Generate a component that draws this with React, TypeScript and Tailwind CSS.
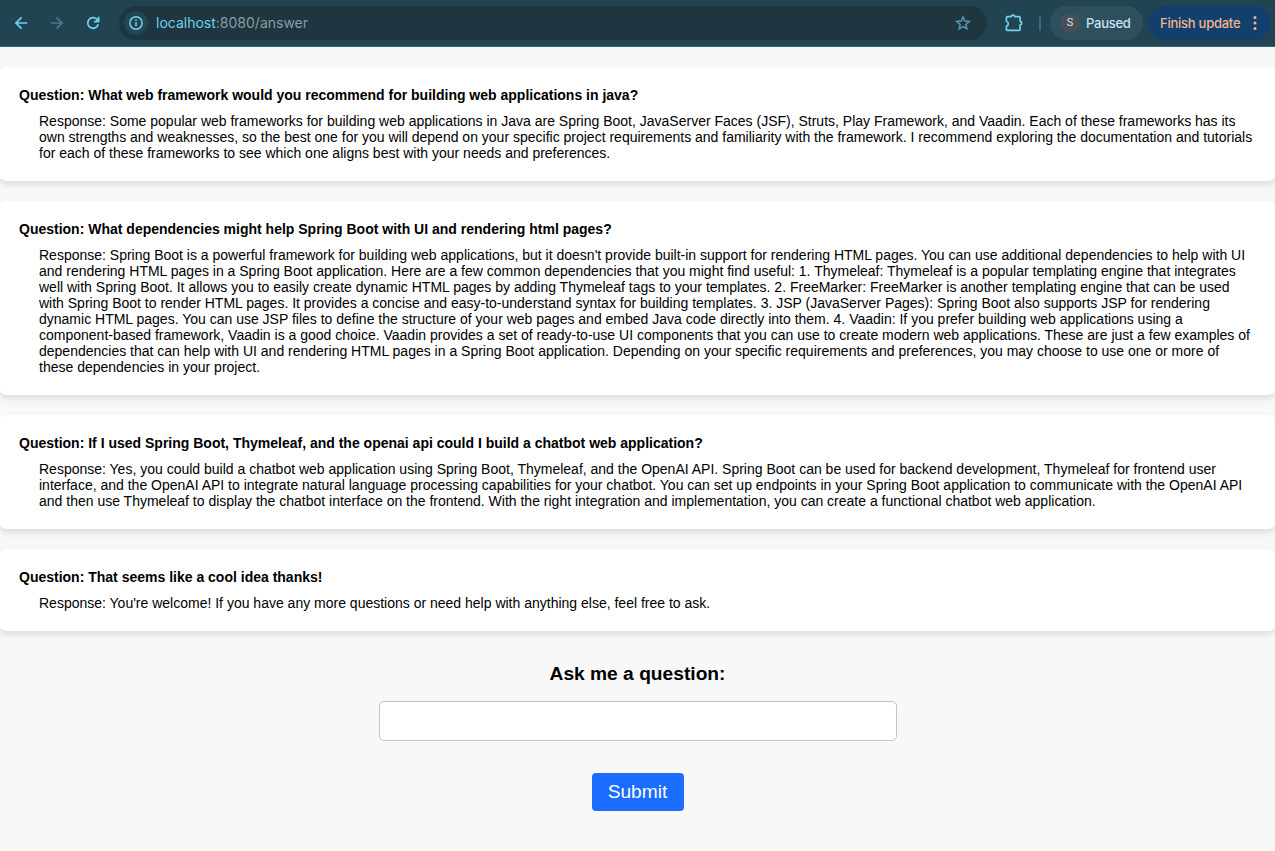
import React from "react";

type Exchange = { question: string; response: string[] };

const exchanges: Exchange[] = [
  {
    question: "What web framework would you recommend for building web applications in java?",
    response: [
      "Response: Some popular web frameworks for building web applications in Java are Spring Boot, JavaServer Faces (JSF), Struts, Play Framework, and Vaadin. Each of these frameworks has its",
      "own strengths and weaknesses, so the best one for you will depend on your specific project requirements and familiarity with the framework. I recommend exploring the documentation and tutorials",
      "for each of these frameworks to see which one aligns best with your needs and preferences.",
    ],
  },
  {
    question: "What dependencies might help Spring Boot with UI and rendering html pages?",
    response: [
      "Response: Spring Boot is a powerful framework for building web applications, but it doesn't provide built-in support for rendering HTML pages. You can use additional dependencies to help with UI",
      "and rendering HTML pages in a Spring Boot application. Here are a few common dependencies that you might find useful: 1. Thymeleaf: Thymeleaf is a popular templating engine that integrates",
      "well with Spring Boot. It allows you to easily create dynamic HTML pages by adding Thymeleaf tags to your templates. 2. FreeMarker: FreeMarker is another templating engine that can be used",
      "with Spring Boot to render HTML pages. It provides a concise and easy-to-understand syntax for building templates. 3. JSP (JavaServer Pages): Spring Boot also supports JSP for rendering",
      "dynamic HTML pages. You can use JSP files to define the structure of your web pages and embed Java code directly into them. 4. Vaadin: If you prefer building web applications using a",
      "component-based framework, Vaadin is a good choice. Vaadin provides a set of ready-to-use UI components that you can use to create modern web applications. These are just a few examples of",
      "dependencies that can help with UI and rendering HTML pages in a Spring Boot application. Depending on your specific requirements and preferences, you may choose to use one or more of",
      "these dependencies in your project.",
    ],
  },
  {
    question: "If I used Spring Boot, Thymeleaf, and the openai api could I build a chatbot web application?",
    response: [
      "Response: Yes, you could build a chatbot web application using Spring Boot, Thymeleaf, and the OpenAI API. Spring Boot can be used for backend development, Thymeleaf for frontend user",
      "interface, and the OpenAI API to integrate natural language processing capabilities for your chatbot. You can set up endpoints in your Spring Boot application to communicate with the OpenAI API",
      "and then use Thymeleaf to display the chatbot interface on the frontend. With the right integration and implementation, you can create a functional chatbot web application.",
    ],
  },
  {
    question: "That seems like a cool idea thanks!",
    response: ["Response: You're welcome! If you have any more questions or need help with anything else, feel free to ask."],
  },
];

function BrowserBar() {
  return (
    <header className="flex h-[47px] items-center border-b border-[#33677a] bg-[#224452] font-['Inter',sans-serif]">
      <button className="ml-[13px] flex size-4 items-center justify-center text-[#71d0ee]" aria-label="Back">
        <svg width="16" height="16" viewBox="0 0 16 16" fill="none" stroke="currentColor" strokeWidth="1.7">
          <path d="M14.2 8H3M8.6 2.3 2.9 8l5.7 5.7" />
        </svg>
      </button>
      <button className="ml-5 flex size-4 items-center justify-center text-[#427b90]" aria-label="Forward">
        <svg width="16" height="16" viewBox="0 0 16 16" fill="none" stroke="currentColor" strokeWidth="1.7">
          <path d="M1.8 8H13M7.4 2.3 13.1 8l-5.7 5.7" />
        </svg>
      </button>
      <button className="ml-5 flex size-4 items-center justify-center text-[#71d0ee]" aria-label="Reload">
        <svg width="16" height="16" viewBox="0 0 16 16" fill="none" stroke="currentColor" strokeWidth="1.8">
          <path d="M13.2 9.2A5.3 5.3 0 1 1 11.8 4.2L13.6 6" />
          <path d="M13.6 1.8v4.8H8.9" />
          <path d="M13.6 3v3.6H10z" fill="currentColor" stroke="none" />
        </svg>
      </button>

      <div className="ml-[18px] flex h-[34px] w-[868px] items-center rounded-full bg-[#1d363f]">
        <span className="ml-[5px] flex size-6 items-center justify-center rounded-full bg-[#244653] text-[#71d0ee]">
          <svg width="16" height="16" viewBox="0 0 16 16" fill="none" stroke="currentColor" strokeWidth="1.5">
            <circle cx="8" cy="8" r="6.2" />
            <path d="M8 7.2v3.9M8 4.6v1.5" strokeWidth="1.6" />
          </svg>
        </span>
        <span className="ml-2 whitespace-nowrap text-sm leading-4 text-[#8d9da3]">
          <span className="text-[#71d0ee]">localhost</span>:8080/answer
        </span>
        <svg className="mr-4 ml-auto" width="16" height="16" viewBox="0 0 16 16" fill="none" stroke="#5399b0" strokeWidth="1.5" strokeLinejoin="miter">
          <path d="m8 1.9 1.75 4.15 4.5.4-3.4 2.95 1 4.4L8 11.5l-3.85 2.3 1-4.4-3.4-2.95 4.5-.4z" />
        </svg>
      </div>

      <svg className="ml-[17px]" width="20" height="20" viewBox="0 0 20 20" fill="none" stroke="#71d0ee" strokeWidth="1.7" strokeLinejoin="round">
        <path d="M3.3 3.6h4a1.7 1.5 0 0 1 3.4 0h4q1.4 0 1.4 1.4v3.3a1.5 1.8 0 0 1 0 3.6v4.1q0 1.4-1.4 1.4H3.6q-1.2 0-1.2-1.2v-3a2.6 2.6 0 0 0 0-5V4.8q0-1.2 1.2-1.2z" />
      </svg>
      <span className="ml-[15px] h-4 w-[2px] rounded bg-[#356c80]" />

      <button className="ml-[9px] flex h-[34px] w-[93px] items-center rounded-full bg-[#2e505d]">
        <span className="ml-[10px] flex size-5 items-center justify-center rounded-full bg-[#454f57] font-['Roboto',sans-serif] text-[11px] text-[#e3e7e9]">S</span>
        <span className="ml-[6px] whitespace-nowrap text-[13px] font-medium leading-4 tracking-[-0.25px] text-[#cce0fc]">Paused</span>
      </button>
      <button className="ml-[5px] flex h-[34px] w-[123px] items-center rounded-full bg-[#133f6c] text-[#f1b68e]">
        <span className="ml-3 whitespace-nowrap text-[13px] font-medium leading-4 tracking-[-0.25px]">Finish update</span>
        <svg className="mr-[14px] ml-auto" width="4" height="16" viewBox="0 0 4 16" fill="currentColor">
          <circle cx="2" cy="2.5" r="1.5" />
          <circle cx="2" cy="8" r="1.5" />
          <circle cx="2" cy="13.5" r="1.5" />
        </svg>
      </button>
    </header>
  );
}

function ExchangeCard({ question, response }: Exchange) {
  return (
    <article className="-mx-px rounded-lg bg-white p-5 text-sm leading-4 shadow-[0_4px_6px_rgba(0,0,0,0.1)]">
      <h2 className="whitespace-nowrap font-bold">Question: {question}</h2>
      <p className="mt-[10px] ml-5">
        {response.map((line) => (
          <span key={line} className="block whitespace-nowrap">
            {line}
          </span>
        ))}
      </p>
    </article>
  );
}

export default function App() {
  return (
    <div className="h-[851px] overflow-hidden bg-[#f8f8f8] font-['Liberation_Sans',Arial,sans-serif] text-black">
      <BrowserBar />
      <main>
        <section className="flex flex-col gap-5 pt-5">
          {exchanges.map((item) => (
            <ExchangeCard key={item.question} {...item} />
          ))}
        </section>
        <form className="flex flex-col items-center pt-8" onSubmit={(e) => e.preventDefault()}>
          <label htmlFor="question" className="text-[19.2px] font-bold leading-[22px]">
            Ask me a question:
          </label>
          <input id="question" className="mt-4 h-10 w-[518px] rounded-[5px] border border-[#c4c4c4] bg-white px-2 outline-none" />
          <button className="mt-8 h-[38px] w-[92px] rounded bg-[#1a6dff] text-[19.2px] leading-[22px] text-white">Submit</button>
        </form>
      </main>
    </div>
  );
}
